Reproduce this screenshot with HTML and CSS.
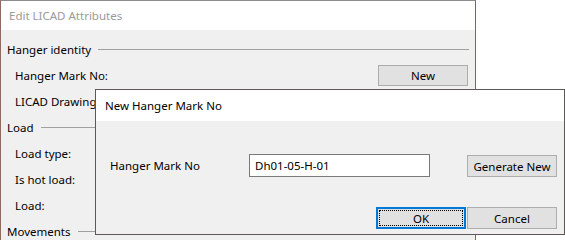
FILE: index.html
```html
<!DOCTYPE html>
<html>
<head>
<meta charset="utf-8">
<link rel="stylesheet" href="styles.css">
</head>
<body>
<div class="win">
  <div class="titlebar inactive">Edit LICAD Attributes</div>
  <div class="winbody">
    <div class="group"><span>Hanger identity</span><i class="rule"></i></div>
    <div class="row"><span class="lbl">Hanger Mark No:</span><button class="btn btn-new">New</button></div>
    <div class="row"><span class="lbl">LICAD Drawing</span></div>
    <div class="group"><span>Load</span><i class="rule"></i></div>
    <div class="row"><span class="lbl">Load type:</span></div>
    <div class="row"><span class="lbl">Is hot load:</span></div>
    <div class="row"><span class="lbl">Load:</span></div>
    <div class="group"><span>Movements</span><i class="rule"></i></div>
  </div>
</div>

<div class="dlg">
  <div class="titlebar dlg-title">New Hanger Mark No</div>
  <div class="dlgbody">
    <div class="field">
      <span class="flabel">Hanger Mark No</span>
      <div class="input">Dh01-05-H-01</div>
      <button class="btn btn-gen">Generate New</button>
    </div>
    <div class="actions">
      <button class="btn btn-ok"><span class="focus">OK</span></button>
      <button class="btn btn-cancel">Cancel</button>
    </div>
  </div>
</div>
</body>
</html>
```

FILE: styles.css
```css
html, body {
  margin: 0;
  padding: 0;
  background: #ffffff;
  width: 565px;
  height: 240px;
  overflow: hidden;
}
body {
  font-family: "Noto Sans", "Open Sans", sans-serif;
  font-size: 11.5px;
  color: #000;
  position: relative;
}
.win {
  width: 476px;
  height: 240px;
  border-top: 1px solid #8c8c8c;
  border-right: 1px solid #a0584a;
  border-left: 1px solid #8e6a60;
  box-sizing: border-box;
  background: #f0f0f0;
  display: flex;
  flex-direction: column;
}
.titlebar {
  background: #ffffff;
  height: 29px;
  display: flex;
  align-items: center;
  padding-left: 8px;
  flex: none;
}
.inactive {
  color: #9a9a9a;
}
.winbody {
  padding: 6px 6px 0 6px;
  display: flex;
  flex-direction: column;
}
.group {
  height: 26px;
  display: flex;
  align-items: center;
}
.rule {
  flex: 1;
  height: 1px;
  background: #a0a0a0;
  margin-left: 7px;
}
.row {
  height: 26px;
  display: flex;
  align-items: center;
  padding-left: 8px;
}
.lbl {
  flex: 1;
}
.btn {
  font: inherit;
  color: #000;
  background: #e1e1e1;
  border: 1px solid #adadad;
  box-sizing: border-box;
  width: 90px;
  height: 22px;
  padding: 0;
  margin: 0;
  display: flex;
  align-items: center;
  justify-content: center;
}
.btn-new {
  height: 21px;
  margin-right: 1px;
}
.dlg {
  position: absolute;
  left: 95px;
  top: 89px;
  width: 470px;
  height: 146px;
  box-sizing: border-box;
  border: 1px solid #5e5757;
  background: #f0f0f0;
  display: flex;
  flex-direction: column;
}
.dlg-title {
  height: 31px;
  padding-left: 9px;
  color: #000;
}
.dlgbody {
  flex: 1;
  padding: 33px 7px 5px 14px;
  display: flex;
  flex-direction: column;
}
.field {
  display: flex;
  align-items: center;
  height: 23px;
}
.flabel {
  width: 139px;
  flex: none;
}
.input {
  width: 181px;
  height: 23px;
  box-sizing: border-box;
  border: 1px solid #7a7a7a;
  background: #fff;
  padding-left: 5px;
  display: flex;
  align-items: center;
}
.btn-gen {
  margin-left: auto;
  margin-top: 1px;
}
.actions {
  margin-top: auto;
  display: flex;
  justify-content: flex-end;
  gap: 1px;
}
.btn-ok {
  border: 2px solid #0078d7;
  padding: 1px;
}
.focus {
  width: 100%;
  height: 100%;
  box-sizing: border-box;
  border: 1px dotted #000;
  display: flex;
  align-items: center;
  justify-content: center;
}
```
